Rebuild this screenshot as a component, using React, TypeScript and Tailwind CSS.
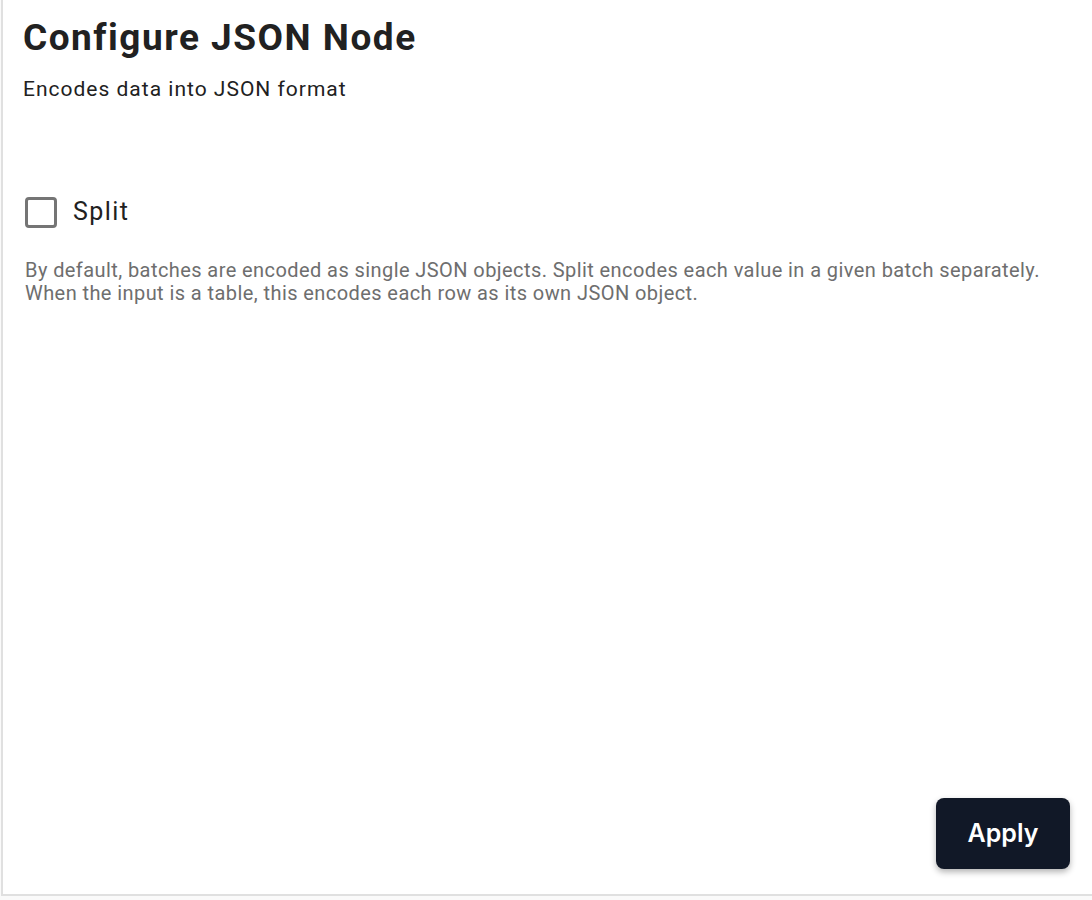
import React from "react";

export default function App() {
  return (
    <div className="w-[1092px] h-[900px] bg-[#fafafa] font-['Roboto',sans-serif]">
      <div className="ml-px h-[896px] border-l-2 border-b-2 border-[#e0e0e0] bg-white flex flex-col pl-[20px] pr-[22px] pt-[16px] pb-[25px]">
        <h1 className="text-[37px] leading-[44px] font-bold text-[#212121] tracking-[1.5px]">Configure JSON Node</h1>
        <p className="mt-[15px] text-[21px] leading-[28px] text-[#212121] tracking-[1px]">Encodes data into JSON format</p>
        <label className="mt-[93px] flex items-center gap-[16px] pl-[2px]">
          <span className="w-[32px] h-[31px] rounded-[4px] border-[3px] border-[#757575] bg-white" />
          <span className="text-[25px] leading-[32px] text-[#212121] tracking-[1.4px]">Split</span>
        </label>
        <p className="mt-[31px] pl-[2px] text-[20px] leading-[23px] text-[#6e6e6e] tracking-[0.42px]">
          By default, batches are encoded as single JSON objects. Split encodes each value in a given batch separately.
          <br />
          When the input is a table, this encodes each row as its own JSON object.
        </p>
        <div className="flex-1" />
        <div className="flex justify-end">
          <button className="w-[134px] h-[71px] rounded-[8px] bg-[#111827] text-white text-[25px] font-semibold font-['Inter',sans-serif] shadow-[0_3px_6px_rgba(0,0,0,0.3)]">
            Apply
          </button>
        </div>
      </div>
    </div>
  );
}
